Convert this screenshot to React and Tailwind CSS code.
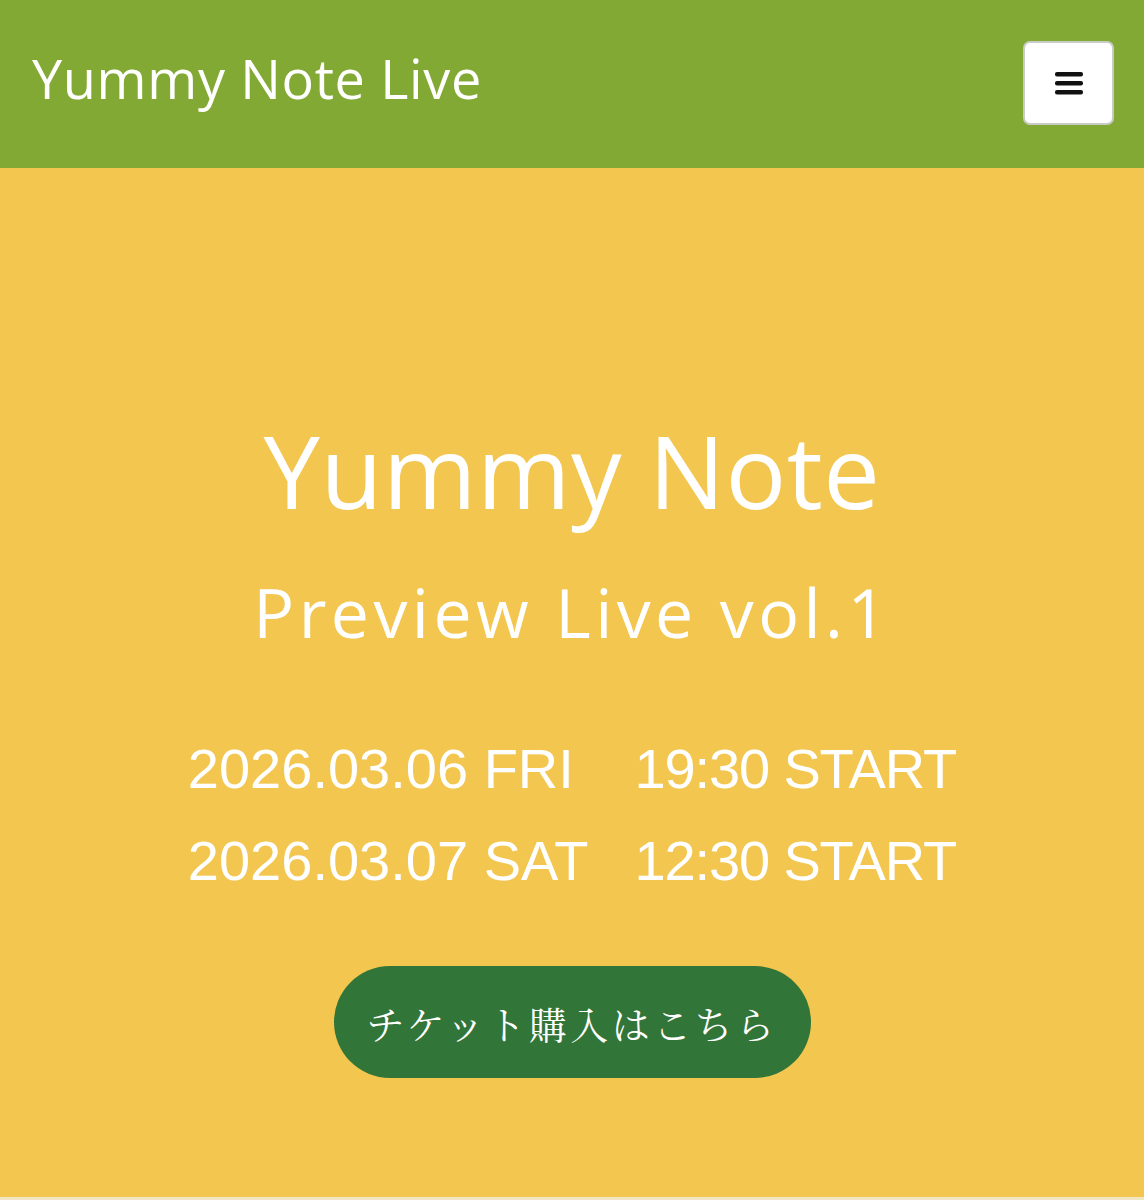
import { useState } from "react";

const schedule = [
  { date: "2026.03.06 FRI", time: "19:30 START" },
  { date: "2026.03.07 SAT", time: "12:30 START" },
];

const Header = () => {
  const [open, setOpen] = useState(false);

  return (
    <header className="flex h-[168px] items-center justify-between bg-[#83a935] pl-8 pr-[30px]">
      <a
        href="#"
        className="-mt-[12px] text-[54px] leading-none tracking-[0.012em] text-white"
        style={{ fontFamily: '"Open Sans", "Noto Sans CJK JP", sans-serif' }}
      >
        Yummy Note Live
      </a>
      <button
        onClick={() => setOpen(!open)}
        className="-mt-[2px] flex h-[84px] w-[91px] items-center justify-center rounded-[7px] border-2 border-[#c9ccc6] bg-white"
      >
        <svg width="28" height="26" viewBox="0 0 28 26">
          <rect x="0" y="2" width="28" height="4.5" rx="2" fill="#111" />
          <rect x="0" y="11" width="28" height="4.5" rx="2" fill="#111" />
          <rect x="0" y="20" width="28" height="4.5" rx="2" fill="#111" />
        </svg>
      </button>
    </header>
  );
};

export default function App() {
  return (
    <div className="min-h-[1200px] bg-[#f2e7c4]">
      <Header />
      <main className="flex h-[1029px] flex-col items-center bg-[#f2c64f] pt-[252px] text-white">
        <h1
          className="text-[101px] font-normal leading-none tracking-[0.005em]"
          style={{ fontFamily: '"Open Sans", sans-serif' }}
        >
          Yummy Note
        </h1>
        <p
          className="mt-[57px] text-[68px] leading-none tracking-[0.065em]"
          style={{ fontFamily: '"Open Sans", sans-serif' }}
        >
          Preview Live vol.1
        </p>
        <div
          className="mt-[77px] grid grid-cols-[auto_auto] gap-x-[46px] text-[56px] leading-[92px]"
          style={{ fontFamily: '"Liberation Sans", Arial, sans-serif' }}
        >
          {schedule.map((s) => (
            <div key={s.date} className="contents">
              <span>{s.date}</span>
              <span className="tracking-[-0.02em]">{s.time}</span>
            </div>
          ))}
        </div>
        <a
          href="#"
          className="mt-[59px] flex h-[112px] w-[477px] items-center justify-center rounded-full bg-[#327538] text-[38px] tracking-[0.09em] text-white"
          style={{ fontFamily: '"Noto Serif CJK JP", "Noto Sans CJK JP", serif' }}
        >
          チケット購入はこちら
        </a>
      </main>
    </div>
  );
}
